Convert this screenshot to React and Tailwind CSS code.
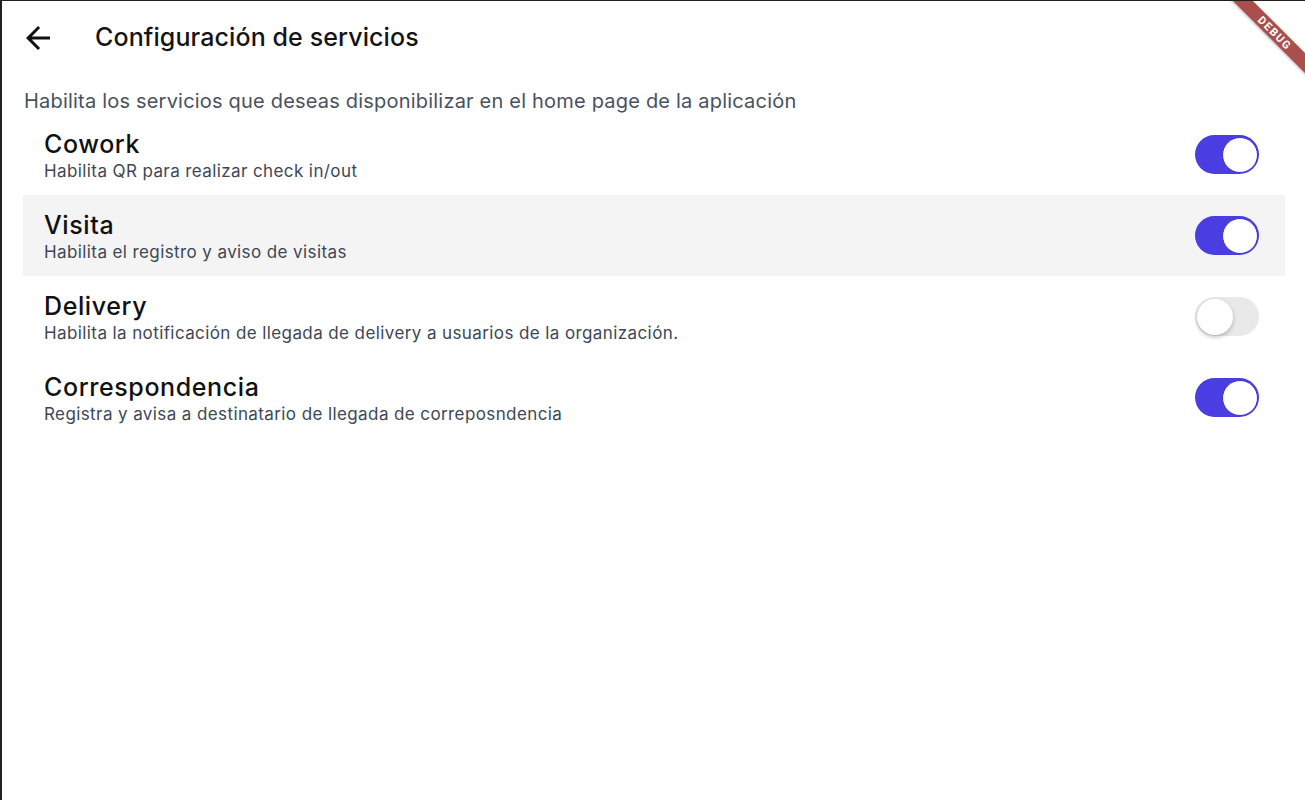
import React, { useState } from 'react';

const services = [
  { id: 'cowork', title: 'Cowork', desc: 'Habilita QR para realizar check in/out', on: true },
  { id: 'visita', title: 'Visita', desc: 'Habilita el registro y aviso de visitas', on: true },
  {
    id: 'delivery',
    title: 'Delivery',
    desc: 'Habilita la notificación de llegada de delivery a usuarios de la organización.',
    on: false,
  },
  {
    id: 'correspondencia',
    title: 'Correspondencia',
    desc: 'Registra y avisa a destinatario de llegada de correposndencia',
    on: true,
  },
];

const Switch = ({ checked, onChange }) => (
  <button
    onClick={onChange}
    className={`relative h-[39px] w-[64px] shrink-0 rounded-full transition-colors ${
      checked ? 'bg-[#4a3de2]' : 'bg-[#e9e9ea]'
    }`}
  >
    <span
      className={`absolute top-[1.5px] h-[36px] w-[36px] rounded-full bg-white transition-all ${
        checked
          ? 'left-[26.5px] border border-[#3a2dd6]'
          : 'left-[1.5px] shadow-[0_2px_4px_rgba(0,0,0,0.25)]'
      }`}
    />
  </button>
);

const App = () => {
  const [state, setState] = useState(
    Object.fromEntries(services.map((s) => [s.id, s.on]))
  );
  const [hovered] = useState('visita');

  return (
    <div
      className="relative h-[800px] w-full overflow-hidden border-l-2 border-t border-[#1f1f1f] bg-white"
      style={{ fontFamily: 'Inter, "Noto Sans", sans-serif' }}
    >
      {/* app bar */}
      <div className="flex h-[74px] items-center pl-[18px]">
        <button className="flex h-[36px] w-[36px] items-center justify-center text-[#111]">
          <svg width="36" height="36" viewBox="0 0 24 24" fill="currentColor">
            <path d="M20 11H7.83l5.59-5.59L12 4l-8 8 8 8 1.41-1.41L7.83 13H20v-2z" />
          </svg>
        </button>
        <h1 className="ml-[39px] text-[25px] font-medium tracking-[0.1px] text-[#141414]">
          Configuración de servicios
        </h1>
      </div>

      <p className="mt-[13px] pl-[22px] text-[20px] leading-[26px] tracking-[0.2px] text-[#48525f]">
        Habilita los servicios que deseas disponibilizar en el home page de la aplicación
      </p>

      <div className="flex flex-col pl-[21px] pr-[20px]">
        {services.map((s) => (
          <div
            key={s.id}
            className={`flex h-[81px] items-center justify-between pl-[21px] pr-[26px] ${
              hovered === s.id ? 'bg-[#f4f4f4]' : ''
            }`}
          >
            <div className="flex flex-col">
              <span className="pt-[2px] text-[25px] font-medium leading-[30px] tracking-[0.6px] text-[#111]">
                {s.title}
              </span>
              <span className="text-[17px] leading-[24px] tracking-[0.4px] text-[#3d4756]">
                {s.desc}
              </span>
            </div>
            <Switch
              checked={state[s.id]}
              onChange={() => setState((p) => ({ ...p, [s.id]: !p[s.id] }))}
            />
          </div>
        ))}
      </div>

      {/* debug banner */}
      <div className="pointer-events-none absolute right-[-40px] top-[25px] flex h-[14px] w-[140px] rotate-45 items-center justify-center bg-[#aa4f4e] shadow-[0_1px_3px_rgba(0,0,0,0.3)]">
        <span
          className="text-[11px] font-bold leading-none tracking-[1.5px] text-white"
          style={{ fontFamily: 'Roboto, sans-serif' }}
        >
          DEBUG
        </span>
      </div>
    </div>
  );
};

export default App;
